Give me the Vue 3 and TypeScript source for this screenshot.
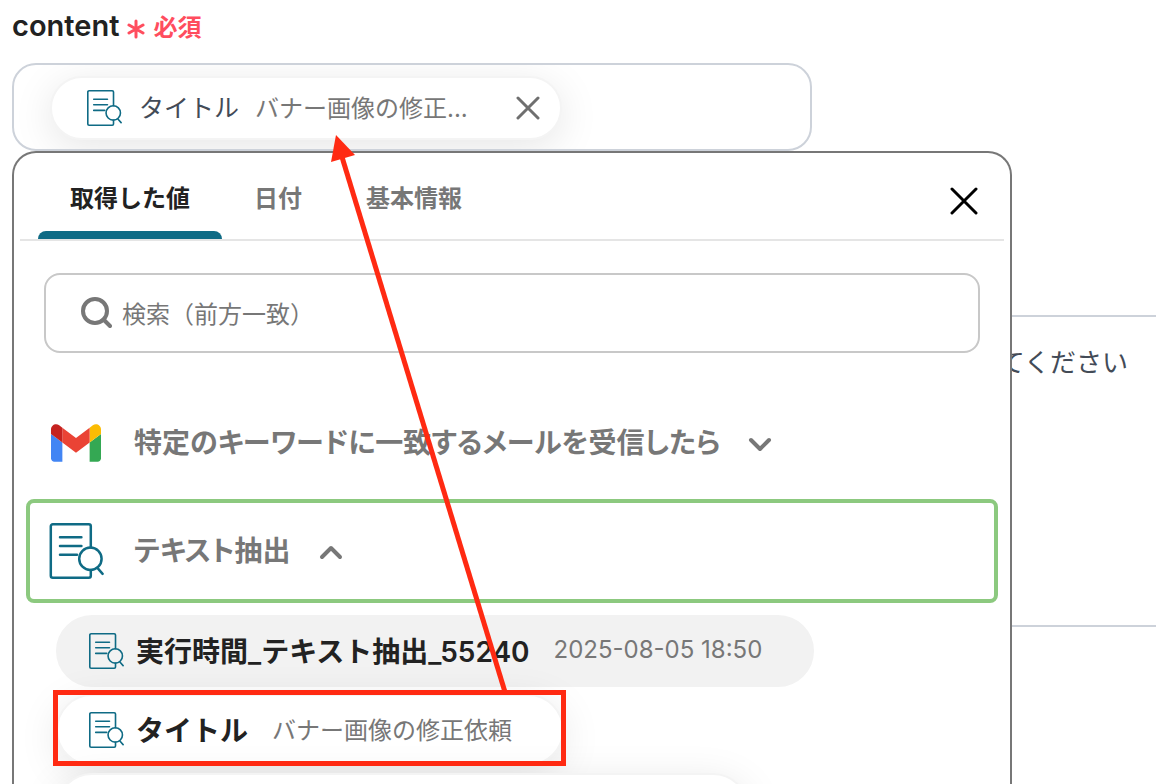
<script setup lang="ts">
import { defineComponent, h, ref } from 'vue'

interface Tab {
  id: string
  label: string
}

const tabs: Tab[] = [
  { id: 'values', label: '取得した値' },
  { id: 'date', label: '日付' },
  { id: 'basic', label: '基本情報' },
]
const activeTab = ref('values')
const query = ref('')
const message = ref('')

const DocSearchIcon = defineComponent({
  setup: () => () =>
    h(
      'svg',
      {
        viewBox: '0 0 56 58',
        fill: 'none',
        stroke: '#0f6b85',
        'stroke-width': 2.5,
        'stroke-linecap': 'round',
        'stroke-linejoin': 'round',
        'aria-hidden': 'true',
      },
      [
        h('path', { d: 'M42.8 25.6V4.2a2 2 0 0 0-2-2h-36a2 2 0 0 0-2 2v49.6a2 2 0 0 0 2 2h36a2 2 0 0 0 2-2V48' }),
        h('path', { d: 'M12 15.3h21.4M12 24h21.4M12 32.7h17' }),
        h('circle', { cx: 42.4, cy: 36.7, r: 11.2 }),
        h('path', { d: 'M49.6 46.2l5 5.6' }),
      ],
    ),
})
</script>

<template>
  <main class="page">
    <div class="label-row">
      <span id="content-label" class="label">content</span>
      <svg class="asterisk" viewBox="0 0 18 20" aria-hidden="true">
        <path d="M9 2v16M2 6l14 8M16 6L2 14" />
      </svg>
      <span class="required">必須</span>
    </div>

    <section class="combo" aria-labelledby="content-label">
      <div class="field">
        <div class="chip">
          <DocSearchIcon class="icon-small" />
          <span class="chip-name">タイトル</span>
          <span class="chip-value">バナー画像の修正...</span>
          <button class="chip-remove" type="button" aria-label="削除">
            <svg viewBox="0 0 24 24"><path d="M2 2l20 20M22 2L2 22" /></svg>
          </button>
        </div>
      </div>

      <div class="panel">
        <header class="panel-head">
          <nav class="tabs" role="tablist">
            <button
              v-for="tab in tabs"
              :key="tab.id"
              type="button"
              role="tab"
              class="tab"
              :class="{ active: tab.id === activeTab }"
              :aria-selected="tab.id === activeTab"
              @click="activeTab = tab.id"
            >
              {{ tab.label }}
            </button>
          </nav>
          <button class="close" type="button" aria-label="閉じる">
            <svg viewBox="0 0 28 28"><path d="M2 2l24 24M26 2L2 26" /></svg>
          </button>
        </header>

        <label class="search">
          <svg viewBox="0 0 32 32" aria-hidden="true">
            <circle cx="15" cy="14" r="12" />
            <path d="M23.500 22.500L30 29" />
          </svg>
          <input v-model="query" type="text" placeholder="検索（前方一致）" aria-label="検索" />
        </label>

        <div class="groups">
          <button class="group" type="button" aria-expanded="false">
            <span class="group-icon">
              <svg class="gmail" viewBox="52 42 88 66" aria-hidden="true">
                <path fill="#4285f4" d="M58 108h14V74L52 59v43c0 3.320 2.690 6 6 6" />
                <path fill="#34a853" d="M120 108h14c3.320 0 6-2.690 6-6V59l-20 15" />
                <path fill="#fbbc04" d="M120 48v26l20-15v-8c0-7.420-8.470-11.650-14.400-7.200" />
                <path fill="#ea4335" d="M72 74V48l24 18 24-18v26L96 92" />
                <path fill="#c5221f" d="M52 51v8l20 15V48l-5.600-4.200c-5.940-4.450-14.400-.220-14.400 7.200" />
              </svg>
            </span>
            <span class="group-name">特定のキーワードに一致するメールを受信したら</span>
            <svg class="chevron" viewBox="0 0 24 16"><path d="M3 3l9 9 9-9" /></svg>
          </button>
          <button class="group open" type="button" aria-expanded="true">
            <span class="group-icon"><DocSearchIcon class="icon-large" /></span>
            <span class="group-name">テキスト抽出</span>
            <svg class="chevron" viewBox="0 0 24 16"><path d="M3 12l9-9 9 9" /></svg>
          </button>
        </div>

        <div class="values">
          <button class="value hovered" type="button">
            <DocSearchIcon class="icon-small" />
            <span class="value-name">実行時間_テキスト抽出_55240</span>
            <span class="value-sample">2025-08-05 18:50</span>
          </button>
          <button class="value" type="button">
            <DocSearchIcon class="icon-small" />
            <span class="value-name">タイトル</span>
            <span class="value-sample">バナー画像の修正依頼</span>
          </button>
          <button class="value next" type="button" aria-label="次の値"></button>
        </div>
      </div>
    </section>

    <textarea v-model="message" class="message" placeholder="てください" aria-label="メッセージ"></textarea>

    <div class="highlight" aria-hidden="true"></div>
    <svg class="arrow" viewBox="0 0 180 560" aria-hidden="true">
      <path class="arrow-line" d="M12 22L175 557" />
      <path class="arrow-head" d="M6 0L1 27L25 20Z" />
    </svg>
  </main>
</template>

<style>
body {
  margin: 0;
  background: #fff;
}
</style>

<style scoped>
.page {
  position: relative;
  box-sizing: border-box;
  height: 100vh;
  padding: 8px 0 0 12px;
  overflow: hidden;
  background: #fff;
  color: #222;
  font-family: Inter, "Noto Sans CJK JP", sans-serif;
}

button,
input,
textarea {
  margin: 0;
  padding: 0;
  border: 0;
  background: none;
  font: inherit;
  color: inherit;
}

svg {
  display: block;
  flex: none;
}

.label-row {
  display: flex;
  align-items: center;
  height: 36px;
  margin-bottom: 19px;
}

.label {
  font-size: 29px;
  font-weight: 600;
  line-height: 36px;
}

.asterisk {
  width: 18px;
  height: 20px;
  margin: 6px 8px 0;
  fill: none;
  stroke: #ff4d5e;
  stroke-width: 3;
  stroke-linecap: round;
}

.required {
  padding-top: 4px;
  color: #ff4d5e;
  font-size: 24px;
  font-weight: 600;
  line-height: 36px;
}

.combo {
  margin-right: 144px;
}

.field {
  box-sizing: border-box;
  display: flex;
  width: 80%;
  height: 88px;
  padding: 11px 36px;
  border: 2px solid #cdd2da;
  border-radius: 24px;
  overflow: hidden;
}

.chip {
  box-sizing: border-box;
  display: flex;
  align-items: center;
  height: 64px;
  padding: 0 20px 0 34px;
  border: 2px solid #f4f4f4;
  border-radius: 32px;
  background: #fff;
  box-shadow: 0 8px 40px rgba(0, 0, 0, 0.1);
  white-space: nowrap;
}

.icon-small {
  width: 36px;
  height: 38px;
}

.icon-large {
  width: 56px;
  height: 58px;
}

.chip-name {
  margin-left: 17px;
  padding-bottom: 4px;
  color: #434b57;
  font-size: 25px;
}

.chip-value {
  margin-left: 16px;
  padding-bottom: 4px;
  color: #777;
  font-size: 24px;
}

.chip-remove {
  margin-left: 48px;
}

.chip-remove svg {
  width: 24px;
  height: 24px;
  fill: none;
  stroke: #6f6f6f;
  stroke-width: 3;
  stroke-linecap: round;
}

.panel {
  position: absolute;
  z-index: 1;
  top: 151px;
  right: 144px;
  bottom: 0;
  left: 12px;
  border: 2px solid #777;
  border-bottom: 0;
  border-radius: 24px 24px 0 0;
  overflow: hidden;
  background: #fff;
}

.panel-head {
  display: flex;
  justify-content: space-between;
  height: 86px;
  margin: 0 6px;
  padding: 0 24px 0 18px;
  border-bottom: 2px solid #e5e5e5;
}

.tabs {
  display: flex;
}

.tab {
  position: relative;
  padding: 0 32px;
  color: #777;
  font-size: 24px;
  font-weight: 600;
}

.tab.active {
  color: #222;
}

.tab.active::after {
  content: "";
  position: absolute;
  right: 0;
  bottom: 0;
  left: 0;
  height: 8px;
  border-radius: 8px 8px 0 0;
  background: #0f6b85;
}

.close {
  padding-top: 10px;
}

.close svg {
  width: 32px;
  height: 28px;
  fill: none;
  stroke: #000;
  stroke-width: 3;
  stroke-linecap: round;
}

.search {
  box-sizing: border-box;
  display: flex;
  align-items: center;
  gap: 10px;
  height: 80px;
  margin: 32px 30px 38px;
  padding: 0 34px;
  border: 2px solid #c8c8c8;
  border-radius: 16px;
}

.search svg {
  width: 32px;
  height: 32px;
  fill: none;
  stroke: #777;
  stroke-width: 4;
  stroke-linecap: round;
}

.search input {
  flex: 1;
  min-width: 0;
  height: 40px;
  padding-top: 2px;
  outline: 0;
  font-size: 24px;
}

.search input::placeholder {
  color: #777;
  opacity: 1;
}

.groups {
  display: flex;
  flex-direction: column;
  gap: 4px;
  margin: 0 12px 12px;
}

.group {
  box-sizing: border-box;
  display: flex;
  align-items: center;
  height: 104px;
  padding: 0 16px;
  border: 4px solid transparent;
  border-radius: 8px;
  color: #777;
  text-align: left;
}

.group.open {
  border-color: #8cc97f;
}

.group-icon {
  display: flex;
  justify-content: center;
  width: 60px;
}

.gmail {
  width: 50px;
  height: 38px;
}

.group-name {
  margin: 0 28px;
  padding-bottom: 4px;
  font-size: 28px;
  font-weight: 600;
  font-feature-settings: "palt";
}

.chevron {
  width: 24px;
  height: 16px;
  margin-top: 4px;
  fill: none;
  stroke: #777;
  stroke-width: 4;
  stroke-linecap: round;
  stroke-linejoin: round;
}

.values {
  display: flex;
  flex-direction: column;
  align-items: flex-start;
  gap: 7px;
  margin: 0 42px;
}

.value {
  box-sizing: border-box;
  display: flex;
  align-items: center;
  height: 72px;
  padding: 0 50px 0 30px;
  border: 2px solid #f4f4f4;
  border-radius: 36px;
  background: #fff;
  box-shadow: 0 8px 40px rgba(0, 0, 0, 0.1);
  white-space: nowrap;
}

.value.hovered {
  border-color: #f2f2f2;
  background: #f2f2f2;
  box-shadow: none;
}

.value.next {
  width: 76%;
}

.value-name {
  margin-left: 12px;
  padding-bottom: 3px;
  font-size: 28px;
  font-weight: 600;
}

.value-sample {
  margin-left: 24px;
  padding-bottom: 3px;
  color: #777;
  font-size: 24px;
}

.message {
  display: block;
  box-sizing: border-box;
  width: 100%;
  height: 312px;
  margin-top: 164px;
  padding: 26px 28px;
  border: solid #cdd2da;
  border-width: 2px 0;
  color: #434b57;
  font-size: 26px;
  line-height: 40px;
  text-align: right;
  resize: none;
  outline: 0;
}

.message::placeholder {
  color: #434b57;
  opacity: 1;
}

.highlight {
  position: absolute;
  z-index: 2;
  top: 690px;
  left: 53px;
  box-sizing: border-box;
  width: 513px;
  height: 76px;
  border: 5px solid #ff2a12;
  pointer-events: none;
}

.arrow {
  position: absolute;
  z-index: 2;
  top: 135px;
  left: 330px;
  width: 180px;
  height: 560px;
  pointer-events: none;
}

.arrow-line {
  fill: none;
  stroke: #ff2a12;
  stroke-width: 5;
}

.arrow-head {
  fill: #ff2a12;
}
</style>
